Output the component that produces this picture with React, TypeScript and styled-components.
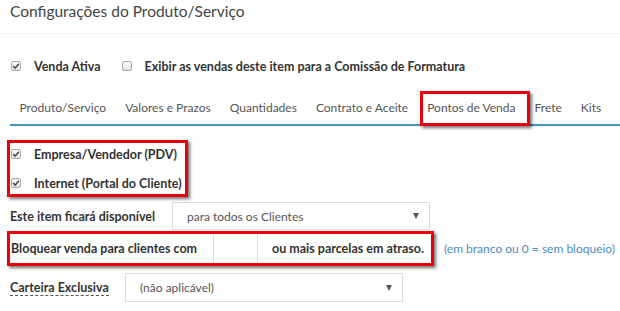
import React from 'react';
import styled, {createGlobalStyle} from 'styled-components';

const GlobalStyle = createGlobalStyle`
  body {
    margin: 0;
    background: #fff;
    font-family: Lato, "Open Sans", sans-serif;
    color: #333;
    white-space: nowrap;
  }
`;

const Page = styled.div`
  width: 620px;
  height: 311px;
  overflow: hidden;
`;

const Header = styled.div`
  height: 34px;
  box-sizing: border-box;
  border-bottom: 1px solid #eeeeee;
  padding: 2px 0 0 10px;
`;

const Title = styled.h1`
  margin: 0;
  font-size: 15.5px;
  line-height: 19px;
  font-weight: 400;
  color: #444;
`;

const Body = styled.div`
  padding: 0 0 0 10px;
`;

const CheckRow = styled.div`
  display: flex;
  align-items: center;
  gap: 21px;
  height: 20px;
  margin-top: 22px;
  padding-left: 1px;
`;

const CheckItem = styled.label`
  display: flex;
  align-items: center;
  gap: 13px;
  height: 16px;
  font-size: 12.5px;
  font-weight: 700;
  color: #333;
`;

const Box = styled.span`
  width: 8px;
  height: 8px;
  border: 1px solid #a9a9a9;
  border-radius: 2px;
  background: linear-gradient(#fcfcfc, #e3e3e3);
  display: inline-flex;
  align-items: center;
  justify-content: center;
  flex: none;
`;

const Check = ({checked}: {checked?: boolean}) => (
  <Box>
    {checked && (
      <svg width="8" height="8" viewBox="0 0 8 8">
        <path d="M1.2 4 L3.2 6.2 L6.8 1.8" stroke="#444" strokeWidth="1.5" fill="none" />
      </svg>
    )}
  </Box>
);

const Tabs = styled.div`
  display: flex;
  align-items: stretch;
  height: 33px;
  border-bottom: 2px solid #4f93c3;
  margin-top: 15px;
`;

const Tab = styled.div<{$active?: boolean}>`
  position: relative;
  display: flex;
  align-items: center;
  padding: 0 9.5px;
  font-size: 12px;
  color: #555;
  ${(p) =>
    p.$active &&
    `
    &::after {
      content: '';
      position: absolute;
      left: 2px;
      right: -5px;
      top: 0;
      bottom: -2px;
      border: 3px solid #e8000b;
      box-shadow: 2px 2px 3px rgba(0, 0, 0, 0.55);
    }
  `}
`;

const RedBox = styled.div<{$width: number}>`
  width: ${(p) => p.$width}px;
  border: 3px solid #e8000b;
  box-shadow: 2px 2px 3px rgba(0, 0, 0, 0.55);
  box-sizing: border-box;
`;

const PointsBox = styled(RedBox)`
  margin: 14px 0 0 -3px;
  padding: 3px 0 3px 1px;
  display: flex;
  flex-direction: column;
  gap: 13px;
`;

const FormRow = styled.div<{$top: number}>`
  display: flex;
  align-items: stretch;
  font-size: 12.5px;
  margin-top: ${(p) => p.$top}px;
`;

const Label = styled.div<{$width: number; $dashed?: boolean}>`
  width: ${(p) => p.$width}px;
  display: flex;
  align-items: center;
  font-weight: 700;
  color: #333;
  span {
    border-bottom: ${(p) => (p.$dashed ? '1px dashed #555' : 'none')};
    line-height: 15px;
  }
`;

const Select = styled.div<{$width: number}>`
  width: ${(p) => p.$width}px;
  height: 29px;
  box-sizing: border-box;
  border: 1px solid #dcdcdc;
  display: flex;
  align-items: center;
  justify-content: space-between;
  padding: 0 10px 0 14px;
  color: #555;
  font-size: 12px;
`;

const Arrow = styled.span`
  width: 0;
  height: 0;
  border-left: 3.5px solid transparent;
  border-right: 3.5px solid transparent;
  border-top: 6px solid #555;
`;

const BlockRow = styled.div`
  display: flex;
  align-items: center;
  gap: 10px;
  margin: 1px 0 0 -3px;
`;

const BlockBox = styled(RedBox)`
  display: flex;
  align-items: stretch;
  height: 35px;
  font-size: 12.5px;
  font-weight: 700;
`;

const BlockText = styled.div<{$width?: number; $pad: number}>`
  ${(p) => (p.$width ? `width: ${p.$width}px;` : 'flex: 1;')}
  padding-left: ${(p) => p.$pad}px;
  box-sizing: border-box;
  display: flex;
  align-items: center;
`;

const NumberCell = styled.div`
  width: 45px;
  box-sizing: border-box;
  border-left: 1px solid #dcdcdc;
  border-right: 1px solid #dcdcdc;
`;

const Hint = styled.span`
  font-size: 12px;
  color: #4a8cc2;
`;

const tabs = [
  'Produto/Serviço',
  'Valores e Prazos',
  'Quantidades',
  'Contrato e Aceite',
  'Pontos de Venda',
  'Frete',
  'Kits'
];

const App = () => {
  return (
    <Page>
      <GlobalStyle />
      <Header>
        <Title>Configurações do Produto/Serviço</Title>
      </Header>
      <Body>
        <CheckRow>
          <CheckItem>
            <Check checked />
            Venda Ativa
          </CheckItem>
          <CheckItem>
            <Check />
            Exibir as vendas deste item para a Comissão de Formatura
          </CheckItem>
        </CheckRow>

        <Tabs>
          {tabs.map((t) => (
            <Tab key={t} $active={t === 'Pontos de Venda'}>
              {t}
            </Tab>
          ))}
        </Tabs>

        <PointsBox $width={181}>
          <CheckItem>
            <Check checked />
            Empresa/Vendedor (PDV)
          </CheckItem>
          <CheckItem>
            <Check checked />
            Internet (Portal do Cliente)
          </CheckItem>
        </PointsBox>

        <FormRow $top={5}>
          <Label $width={162}>
            <span>Este item ficará disponível</span>
          </Label>
          <Select $width={258} style={{height: 28}}>
            para todos os Clientes
            <Arrow />
          </Select>
        </FormRow>

        <BlockRow>
          <BlockBox $width={427}>
            <BlockText $width={203} $pad={1}>
              Bloquear venda para clientes com
            </BlockText>
            <NumberCell />
            <BlockText $pad={14}>ou mais parcelas em atraso.</BlockText>
          </BlockBox>
          <Hint>(em branco ou 0 = sem bloqueio)</Hint>
        </BlockRow>

        <FormRow $top={7}>
          <Label $width={115} $dashed>
            <span>Carteira Exclusiva</span>
          </Label>
          <Select $width={278}>
            (não aplicável)
            <Arrow />
          </Select>
        </FormRow>
      </Body>
    </Page>
  );
};

export default App;
